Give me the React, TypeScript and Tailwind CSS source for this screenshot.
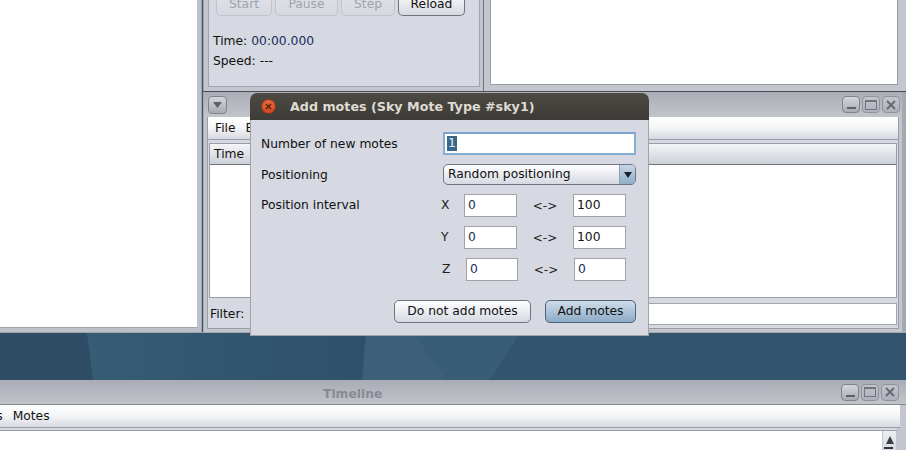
import React from 'react';

const btn = 'flex items-center justify-center rounded-[5px] border bg-gradient-to-b';

const WinButtons = () => (
  <div className="flex items-center gap-[2px]">
    <div className="w-[18px] h-[17px] rounded-[4px] border border-[#7f838c] bg-gradient-to-b from-[#d4d6dc] to-[#a8abb3] flex items-end justify-center pb-[3px]">
      <div className="w-[9px] h-[2px] bg-[#5c6068]" />
    </div>
    <div className="w-[18px] h-[17px] rounded-[4px] border border-[#8f939b] bg-gradient-to-b from-[#c2c5cc] to-[#aeb1b9] flex items-center justify-center">
      <div className="w-[12px] h-[10px] border border-[#70747c] border-t-2" />
    </div>
    <div className="w-[18px] h-[17px] rounded-[4px] border border-[#8f939b] bg-gradient-to-b from-[#c2c5cc] to-[#aeb1b9] flex items-center justify-center">
      <svg width="10" height="10" viewBox="0 0 10 10">
        <path d="M1 1 L9 9 M9 1 L1 9" stroke="#666a72" strokeWidth="2" />
      </svg>
    </div>
  </div>
);

const MenuBar = ({ className, children }: { className: string; children: React.ReactNode }) => (
  <div className={`flex items-center bg-gradient-to-b from-white via-[#f4f5f7] to-[#d6d9e1] border-b border-[#9a9da6] ${className}`}>
    {children}
  </div>
);

const ToolButton = ({ label, w, enabled }: { label: string; w: string; enabled?: boolean }) => (
  <div
    className={`${btn} ${w} h-[16px] border-t-0 rounded-t-none items-end leading-[15px] pb-[3px] ${
      enabled
        ? 'border-[#70747c] from-[#f0f1f4] to-[#d6d9e1] text-[#111]'
        : 'border-[#c0c3ca] from-[#dcdfe5] to-[#d6d9e1] text-[#9fa3ab]'
    }`}
  >
    {label}
  </div>
);

const Field = ({ value, w, dark }: { value: string; w: string; dark?: boolean }) => (
  <div className={`${w} h-[23px] border border-[#a2a2a2] bg-white pl-[3px] flex items-center ${dark ? 'text-[#111]' : 'text-[#102a5c]'}`}>
    {value}
  </div>
);

const Row = ({ axis, from, to, z }: { axis: string; from: string; to: string; z?: boolean }) => (
  <div className="flex items-center h-[23px]">
    <span className={`${z ? 'w-[25px] pl-[1px]' : 'w-[23px]'} text-[#222]`}>{axis}</span>
    <Field value={from} w={z ? 'w-[52px]' : 'w-[53px]'} />
    <span className="w-[56px] text-center text-[#222] text-[12px]">&lt;-&gt;</span>
    <Field value={to} w={z ? 'w-[52px]' : 'w-[53px]'} dark={to !== '0'} />
  </div>
);

const AddMotesDialog = () => (
  <div className="absolute left-[250px] top-[93px] w-[399px] h-[243px] flex flex-col">
    <div className="h-[27px] rounded-t-[7px] bg-gradient-to-b from-[#4d4a44] to-[#3c3b37] flex items-center pl-[11px] shrink-0">
      <div className="w-[15px] h-[15px] rounded-full bg-gradient-to-b from-[#e8683a] to-[#d2461f] border border-[#8f3a1f] flex items-center justify-center">
        <svg width="7" height="7" viewBox="0 0 7 7">
          <path d="M1 1 L6 6 M6 1 L1 6" stroke="#4a2015" strokeWidth="1.2" />
        </svg>
      </div>
      <span className="ml-[14px] font-bold text-[12.7px] text-[#dfdbd2] whitespace-nowrap">Add motes (Sky Mote Type #sky1)</span>
    </div>
    <div className="flex-1 bg-[#d6d9e1] border border-t-0 border-[#a3a3a3] pl-[10px] pr-[12px] pt-[12px] flex flex-col">
      <div className="flex items-center justify-between h-[23px]">
        <span className="pt-[1px]">Number of new motes</span>
        <div className="w-[193px] h-[23px] border-2 border-[#86aed4] bg-white border-t-[#7ba5d0] pl-[2px] flex items-center">
          <span className="bg-[#39698a] text-[#e8eef3] leading-[15px] px-[1px]">1</span>
        </div>
      </div>
      <div className="flex items-center justify-between h-[21px] mt-[9px]">
        <span className="pt-[1px]">Positioning</span>
        <div className="w-[193px] h-[21px] rounded-[5px] border border-[#6e7480] bg-gradient-to-b from-white to-[#d6d9e1] flex items-center overflow-hidden">
          <span className="flex-1 pl-[4px]">Random positioning</span>
          <div className="w-[16px] h-full bg-gradient-to-b from-[#c6d6e6] to-[#8fadc8] border-l border-[#8f9fb0] flex items-center justify-center">
            <svg width="8" height="6" viewBox="0 0 8 6"><path d="M0 0 H8 L4 6 Z" fill="#1a2028" /></svg>
          </div>
        </div>
      </div>
      <div className="flex justify-between mt-[9px]">
        <span className="leading-[23px]">Position interval</span>
        <div className="flex flex-col gap-[9px] w-[195px] items-start">
          <Row axis="X" from="0" to="100" />
          <Row axis="Y" from="0" to="100" />
          <Row axis="Z" from="0" to="0" z />
        </div>
      </div>
      <div className="flex justify-end gap-[14px] mt-[19px]">
        <div className={`${btn} w-[137px] h-[23px] border-[#70747c] from-white to-[#d6d9e1]`}>Do not add motes</div>
        <div className={`${btn} w-[91px] h-[23px] border-[#4f6378] from-[#cfdcea] to-[#8dabc6]`}>Add motes</div>
      </div>
    </div>
  </div>
);

export default function App() {
  return (
    <div className="relative w-[915px] h-[450px] overflow-hidden bg-white font-['DejaVu_Sans',sans-serif] text-[12.3px] text-[#111]">
      <div className="w-[906px] h-full flex flex-col">
        {/* upper windows */}
        <div className="flex h-[333px] shrink-0">
          <div className="w-[203px] h-full flex flex-col">
            <div className="flex-1 flex bg-[#bcc0c9] border-b border-[#a2a5ad]">
              <div className="w-[197px] h-[328px] bg-white border-b border-[#a2a5ad]" />
              <div className="w-[5px] border-r border-[#a2a5ad]" />
              <div className="w-[1px] bg-[#34566f]" />
            </div>
          </div>
          <div className="flex-1 flex flex-col">
            <div className="h-[92px] flex shrink-0 border-b border-[#4a4c52]">
              {/* simulation control */}
              <div className="w-[280px] bg-[#c3c6ce] pl-[4px] pr-[3px] pb-[4px] border-l border-[#a2a5ad]">
                <div className="h-full bg-[#d6d9e1] border border-t-0 border-[#a2a5ad] pl-[4px] pr-[7px]">
                  <div className="flex gap-[3px] pl-[3px]">
                    <ToolButton label="Start" w="w-[56px]" />
                    <ToolButton label="Pause" w="w-[63px]" />
                    <ToolButton label="Step" w="w-[54px]" />
                    <ToolButton label="Reload" w="w-[67px]" enabled />
                  </div>
                  <div className="mt-[15px] h-[20px] flex items-center gap-[4px]">
                    <span>Time:</span>
                    <span className="text-[#102a5c]">00:00.000</span>
                  </div>
                  <div className="h-[20px] flex items-center gap-[4px]">
                    <span>Speed:</span>
                    <span>---</span>
                  </div>
                </div>
              </div>
              {/* network view */}
              <div className="flex-1 bg-[#c3c6ce] border-l border-[#6f7279] pl-[6px] pr-[8px] pb-[6px]">
                <div className="h-full bg-white border border-t-0 border-[#9a9da6]" />
              </div>
            </div>
            {/* log listener */}
            <div className="flex-1 flex flex-col bg-[#c3c6ce] border-l border-r-[4px] border-[#a6a9b1] border-b">
              <div className="h-[25px] shrink-0 bg-gradient-to-b from-[#abaeb6] to-[#c1c4cb] flex items-center justify-between pl-[4px] pr-[2px]">
                <div className="w-[19px] h-[18px] rounded-[4px] border border-[#7f838c] bg-gradient-to-b from-[#d4d6dc] to-[#a8abb3] flex items-center justify-center">
                  <svg width="9" height="6" viewBox="0 0 9 6"><path d="M0 0 H9 L4.5 6 Z" fill="#5c6068" /></svg>
                </div>
                <WinButtons />
              </div>
              <div className="flex-1 mx-[3px] mb-[3px] bg-[#d6d9e1] border border-t-0 border-[#9a9da6] flex flex-col">
                <MenuBar className="h-[23px] shrink-0 pl-[7px] gap-[10px] pt-[1px]">
                  <span>File</span>
                  <span>Edit</span>
                </MenuBar>
                <div className="mx-[1px] mt-[3px] h-[155px] shrink-0 border border-[#9a9da6] bg-white flex flex-col">
                  <div className="h-[21px] bg-gradient-to-b from-[#f4f5f7] to-[#ccd0d8] border-b border-[#6f7279] pl-[4px] flex items-center">Time</div>
                </div>
                <div className="flex items-center h-[22px] mt-[5px] pl-[2px] pr-[1px]">
                  <span className="w-[241px] pt-[1px]">Filter:</span>
                  <div className="flex-1 h-full bg-white border border-[#a2a5ad]" />
                </div>
              </div>
            </div>
          </div>
        </div>

        {/* desktop wallpaper */}
        <div className="h-[47px] shrink-0 bg-[#34566f]">
          <svg width="906" height="47" viewBox="0 0 906 47">
            <defs>
              <linearGradient id="wall" x1="0" y1="0" x2="1" y2="0">
                <stop offset="0" stopColor="#365c76" />
                <stop offset="1" stopColor="#2f506a" />
              </linearGradient>
            </defs>
            <path d="M0 0 H87 L93 47 H0 Z" fill="#2e4c64" />
            <path d="M87 0 H366 L362 47 H93 Z" fill="url(#wall)" />
            <path d="M366 0 H413 L448 47 H362 Z" fill="#3e5f79" />
            <path d="M413 0 H520 L490 47 H448 Z" fill="#395d74" />
            <path d="M520 0 H906 V47 H490 Z" fill="#32546d" />
          </svg>
        </div>

        {/* timeline */}
        <div className="flex-1 flex flex-col min-h-0">
          <div className="h-[25px] shrink-0 relative bg-gradient-to-b from-[#a9acb4] to-[#c1c4cb] border-b border-[#85888f] flex items-center justify-end pr-[7px]">
            <span className="absolute left-[323px] top-[5px] font-bold text-[12.3px] text-[#878a92]">Timeline</span>
            <WinButtons />
          </div>
          <div className="bg-[#c3c6ce] shrink-0 overflow-hidden">
            <MenuBar className="h-[23px] gap-[10px] -ml-[39px] w-[939px]">
              <span>Events</span>
              <span>Motes</span>
            </MenuBar>
          </div>
          <div className="flex-1 flex bg-[#c3c6ce]">
            <div className="flex-1 flex flex-col mr-[9px]">
              <div className="h-[3px] bg-[#d6d9e1] border-b border-[#9a9da6]" />
              <div className="flex-1 bg-white flex justify-end">
                <div className="w-[15px] bg-gradient-to-b from-[#eceef2] to-[#d6d9e1] border-x border-[#c3c6ce] flex flex-col items-center pt-[5px]">
                  <svg width="8" height="8" viewBox="0 0 8 8"><path d="M4 0 L8 8 H0 Z" fill="#3a3d44" /></svg>
                  <div className="w-[9px] h-[2px] bg-[#33363c] mt-[3px] -ml-[3px]" />
                </div>
              </div>
            </div>
          </div>
        </div>
      </div>

      <AddMotesDialog />
    </div>
  );
}
